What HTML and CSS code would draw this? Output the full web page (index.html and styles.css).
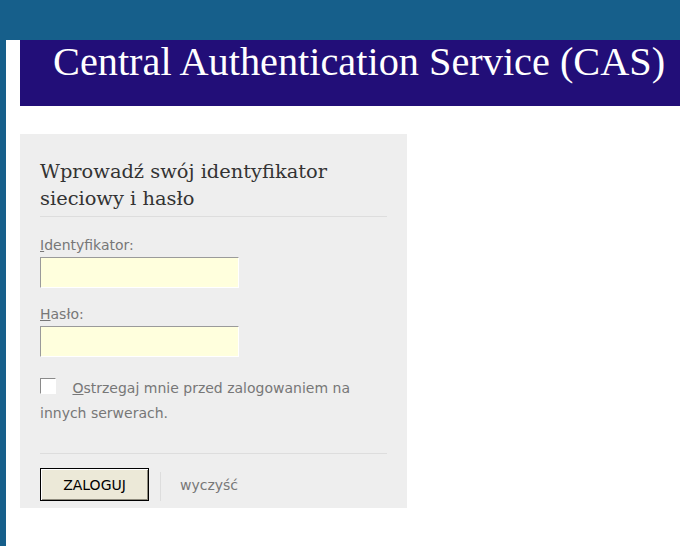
FILE: index.html
```html
<!DOCTYPE html>
<html lang="pl">
    <head>
        <meta charset="UTF-8" />
        <meta name="viewport" content="width=device-width, initial-scale=1.0" />
        <title>Central Authentication Service</title>
        <link rel="stylesheet" href="styles.css">
    </head>
    <body>
        <div class="topbar"></div>
        <div class="page">
            <div class="banner">
                <h1>Central Authentication Service (CAS)</h1>
            </div>

            <form class="login-box">
                <h2>Wprowadź swój identyfikator sieciowy i hasło</h2>

                <div class="row">
                    <label for="username"><span class="key">I</span>dentyfikator:</label>
                    <input type="text" id="username" name="username" />
                </div>

                <div class="row">
                    <label for="password"><span class="key">H</span>asło:</label>
                    <input type="password" id="password" name="password" />
                </div>

                <div class="warn">
                    <input type="checkbox" id="warn" name="warn" />
                    <label for="warn"><span class="key">O</span>strzegaj mnie przed zalogowaniem na innych serwerach.</label>
                </div>

                <div class="actions">
                    <button type="submit" class="btn-submit">ZALOGUJ</button>
                    <span class="sep"></span>
                    <a href="#" class="reset">wyczyść</a>
                </div>
            </form>
        </div>
    </body>
</html>
```

FILE: styles.css
```css
body {
    margin: 0;
    background: #fff;
    font-family: "DejaVu Sans", Verdana, sans-serif;
}

.topbar {
    height: 40px;
    background-color: #165f8b;
}

.page {
    border-left: 6px solid #165f8b;
    padding-left: 14px;
    min-height: 506px;
}

.banner {
    height: 66px;
    background-color: #220e78;
    overflow: hidden;
}

.banner h1 {
    margin: 0;
    padding-left: 33px;
    font-family: "Liberation Serif", Georgia, serif;
    font-weight: normal;
    font-size: 40.3px;
    line-height: 44px;
    color: #fff;
    white-space: nowrap;
}

.login-box {
    margin-top: 28px;
    width: 347px;
    padding: 24px 20px 7px 20px;
    background-color: #eeeeee;
}

.login-box h2 {
    margin: 0 0 18px 0;
    padding-bottom: 4px;
    border-bottom: 1px solid #dddddd;
    font-family: "DejaVu Serif", Georgia, serif;
    font-weight: normal;
    font-size: 19.4px;
    line-height: 27px;
    color: #333;
}

.row {
    margin-bottom: 16px;
}

.row label {
    display: block;
    font-size: 14px;
    line-height: 18px;
    color: #777;
    padding-top: 1px;
    margin-bottom: 3px;
}

.key {
    text-decoration: underline;
}

.row input {
    display: block;
    width: 199px;
    height: 31px;
    box-sizing: border-box;
    margin: 0;
    border: 1px solid #fff;
    border-top-color: #9a9a9a;
    border-left-color: #9a9a9a;
    background-color: #ffffdd;
}

.warn {
    font-size: 14px;
    line-height: 25px;
    color: #777;
    padding-top: 3px;
    padding-bottom: 27px;
    border-bottom: 1px solid #dddddd;
}

.warn input {
    appearance: none;
    width: 16px;
    height: 16px;
    margin: 2px 12px 0 0;
    vertical-align: top;
    border: 1px solid #fff;
    border-top-color: #8a8a8a;
    border-left-color: #8a8a8a;
    background-color: #fff;
}

.actions {
    display: flex;
    align-items: center;
    padding-top: 14px;
}

.btn-submit {
    width: 109px;
    height: 33px;
    padding: 0;
    font-family: "DejaVu Sans", Verdana, sans-serif;
    font-size: 14px;
    color: #000;
    background-color: #ece9d8;
    border: 1px solid #000;
    box-shadow: inset 1px 1px 0 #fff, inset -1px -1px 0 #8d8a7c;
    cursor: pointer;
}

.sep {
    width: 1px;
    height: 29px;
    margin: 4px 19px 0 11px;
    background-color: #dddddd;
}

.reset {
    font-size: 14px;
    color: #777;
    text-decoration: none;
}
```
